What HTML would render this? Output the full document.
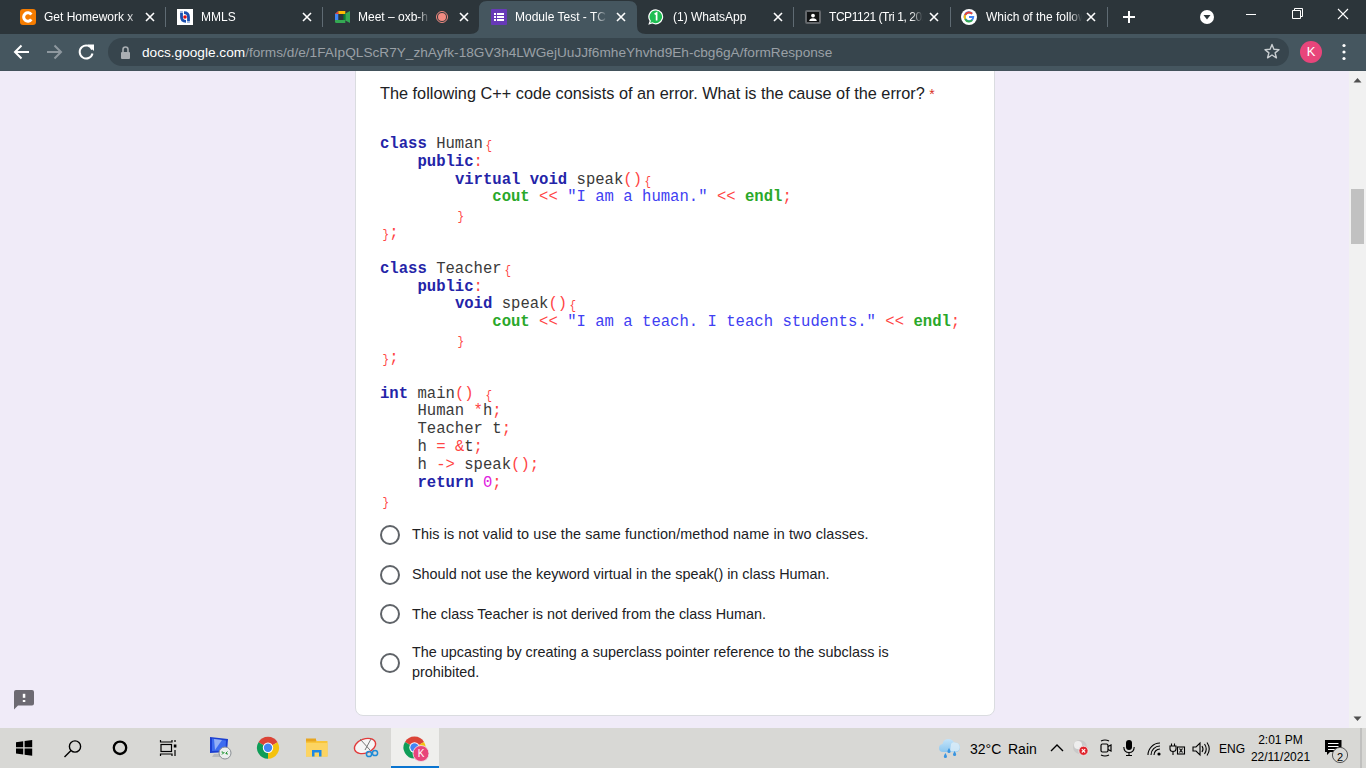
<!DOCTYPE html>
<html><head><meta charset="utf-8">
<style>
*{margin:0;padding:0;box-sizing:border-box}
html,body{width:1366px;height:768px;overflow:hidden;font-family:"Liberation Sans",sans-serif;background:#f0ebf8}
.abs{position:absolute}
#tabstrip{position:absolute;left:0;top:0;width:1366px;height:34px;background:#2c353a}
#toolbar{position:absolute;left:0;top:34px;width:1366px;height:37px;background:#45565f;border-bottom:1px solid #42525b}
#omni{position:absolute;left:108px;top:38px;width:1181px;height:28px;border-radius:14px;background:#37454d}
#page{position:absolute;left:0;top:71px;width:1349px;height:657px;background:#f0ebf8;overflow:hidden}
#scroll{position:absolute;left:1349px;top:71px;width:17px;height:657px;background:#f1f1f1}
#taskbar{position:absolute;left:0;top:728px;width:1366px;height:40px;background:#d8d8d5}
.card{position:absolute;left:355px;top:-20px;width:640px;height:665px;background:#fff;border:1px solid #dadce0;border-radius:8px}
.tab{position:absolute;top:0;height:34px;color:#fff;font-size:13px}
.tabt{position:absolute;top:10px;height:16px;line-height:14px;white-space:nowrap;overflow:hidden;font-size:12px;color:#fff;-webkit-mask-image:linear-gradient(to right,#000 calc(100% - 12px),transparent)}
.sep{position:absolute;top:7px;width:1px;height:20px;background:#5f6b73}
.x{position:absolute;top:10px;width:14px;height:14px}
pre{font-family:"Liberation Mono",monospace}
.code{position:absolute;left:380px;top:65px;font-size:15.6px;line-height:17.83px;color:#3a3a3a;white-space:pre}
.k{color:#2424a8;font-weight:bold}
.b{display:inline-block;font-style:normal;transform:translate(1px,1.5px) scale(.7,.85)}
.r{color:#ff4545}
.g{color:#2aa82a;font-weight:bold}
.s{color:#4040f2}
.m{color:#e020e0}
.opt{position:absolute;left:412px;font-size:14.4px;white-space:nowrap;line-height:20px;color:#202124}
.tb{font-size:14px;line-height:16px;color:#000;white-space:nowrap}
.radio{position:absolute;left:380px;width:20px;height:20px;border:2px solid #5f6368;border-radius:50%}
</style></head><body>

<div id="tabstrip">
  <!-- active tab -->
  <svg class="abs" style="left:470px;top:0" width="176" height="34" viewBox="0 0 176 34">
    <path d="M0 34 Q9 34 9 26 L9 9 Q9 1 17 1 L159 1 Q167 1 167 9 L167 26 Q167 34 176 34 Z" fill="#45565f"/>
  </svg>
  <div class="sep" style="left:165px"></div>
  <div class="sep" style="left:322px"></div>
  <div class="sep" style="left:793px"></div>
  <div class="sep" style="left:950px"></div>
  <div class="sep" style="left:1107px"></div>
  <!-- tab1 -->
  <div class="abs" style="left:20px;top:9px;width:16px;height:16px;background:#f57c00;border-radius:3px"></div>
  <svg class="abs" style="left:20px;top:9px" width="16" height="16" viewBox="0 0 16 16"><path d="M11.3 5.6 A4.2 4.2 0 1 0 11.3 10.4" fill="none" stroke="#fff" stroke-width="3"/></svg>
  <div class="tabt" style="left:44px;width:96px">Get Homework x</div>
  <!-- tab2 -->
  <div class="abs" style="left:177px;top:9px;width:16px;height:16px;background:#fff"></div>
  <svg class="abs" style="left:177px;top:9px" width="16" height="16" viewBox="0 0 16 16"><path d="M4.5 2 L4.5 4" stroke="#9db6e0" stroke-width="2.8"/><path d="M4.5 4 L4.5 8 Q4.5 12.3 9 12.3" fill="none" stroke="#1a4fb0" stroke-width="2.8"/><path d="M11.5 14 L11.5 12" stroke="#9db6e0" stroke-width="2.8"/><path d="M11.5 12 L11.5 8 Q11.5 3.7 7 3.7" fill="none" stroke="#1a4fb0" stroke-width="2.8"/><circle cx="8" cy="8" r="1.8" fill="#e01010"/></svg>
  <div class="tabt" style="left:201px;width:96px">MMLS</div>
  <!-- tab3 -->
  <svg class="abs" style="left:334.5px;top:11px" width="15" height="12" viewBox="0 0 16 14" preserveAspectRatio="none"><path d="M0 3.5 L3.5 0 L3.5 10.5 L0 10.5Z" fill="#4285f4"/><path d="M3.5 0 L11 0 L11 3.5 L3.5 3.5Z" fill="#fbbc04"/><path d="M0 10.5 L11 10.5 L11 14 L1.5 14 Q0 14 0 12.5Z" fill="#34a853"/><path d="M11 3 L16 0 L16 14 L11 11Z" fill="#34a853"/><path d="M0 3.5 L3.5 3.5 L3.5 0Z" fill="#ea4335"/><rect x="9" y="3.5" width="2" height="7" fill="#00832d"/></svg>
  <div class="tabt" style="left:358px;width:72px">Meet – oxb-h</div>
  <div class="abs" style="left:436px;top:11px;width:12px;height:12px;border-radius:50%;border:1px solid #f28b82;background:#2c353a"></div>
  <div class="abs" style="left:438px;top:13px;width:8px;height:8px;border-radius:50%;background:#f28b82"></div>
  <!-- tab4 active -->
  <div class="abs" style="left:491px;top:9px;width:16px;height:16px;background:#673ab7;border-radius:1px"></div>
  <svg class="abs" style="left:491px;top:9px" width="16" height="16" viewBox="0 0 16 16"><rect x="3" y="4" width="2" height="2" fill="#fff"/><rect x="6" y="4" width="7" height="2" fill="#fff"/><rect x="3" y="7" width="2" height="2" fill="#fff"/><rect x="6" y="7" width="7" height="2" fill="#fff"/><rect x="3" y="10" width="2" height="2" fill="#fff"/><rect x="6" y="10" width="7" height="2" fill="#fff"/></svg>
  <div class="tabt" style="left:515px;width:92px">Module Test - TCP1121</div>
  <!-- tab5 -->
  <svg class="abs" style="left:647px;top:8px" width="18" height="18" viewBox="0 0 18 18"><path d="M9 1.2 A7.6 7.6 0 1 1 5.2 15.6 L1.3 16.8 L2.6 13.1 A7.6 7.6 0 0 1 9 1.2Z" fill="#fff"/><path d="M9 2.5 A6.3 6.3 0 1 1 5.5 14.2 L3.2 14.9 L3.9 12.7 A6.3 6.3 0 0 1 9 2.5Z" fill="#1ebe52"/><path d="M7.6 6.3 L9.6 5 L9.6 12.6" fill="none" stroke="#fff" stroke-width="1.7"/></svg>
  <div class="tabt" style="left:673px;width:96px">(1) WhatsApp</div>
  <!-- tab6 -->
  <div class="abs" style="left:805px;top:10px;width:16px;height:14px;background:#111314;border:2px solid #64686c;border-radius:2px"></div>
  <svg class="abs" style="left:805px;top:10px" width="16" height="14" viewBox="0 0 16 14"><circle cx="8" cy="5.6" r="1.9" fill="#fff"/><path d="M4.2 11 Q4.5 8.4 8 8.3 Q11.5 8.4 11.8 11Z" fill="#fff"/></svg>
  <div class="tabt" style="left:829px;width:94px;letter-spacing:-0.45px">TCP1121 (Tri 1, 2021/22)</div>
  <!-- tab7 -->
  <svg class="abs" style="left:961px;top:9px" width="16" height="16" viewBox="0 0 16 16"><circle cx="8" cy="8" r="8" fill="#fff"/><path d="M13.2 7 L8 7 L8 9 L11.2 9 A3.4 3.4 0 1 1 10.4 5.4 L11.8 4 A5.3 5.3 0 1 0 13.2 7Z" fill="#4285f4"/><path d="M3.3 5.5 A5.3 5.3 0 0 1 11.8 4 L10.4 5.4 A3.4 3.4 0 0 0 5 6.5Z" fill="#ea4335"/><path d="M3.3 5.5 L5 6.5 A3.4 3.4 0 0 0 5 9.5 L3.3 10.5 A5.3 5.3 0 0 1 3.3 5.5Z" fill="#fbbc05"/><path d="M3.3 10.5 L5 9.5 A3.4 3.4 0 0 0 10.6 10.5 L12 11.8 A5.3 5.3 0 0 1 3.3 10.5Z" fill="#34a853"/></svg>
  <div class="tabt" style="left:986px;width:96px">Which of the following</div>
  <!-- close xs -->
  <svg class="abs" style="left:0;top:0" width="1366" height="34">
    <g stroke="#fff" stroke-width="1.6" fill="none">
      <path d="M146 13 L154 21 M154 13 L146 21"/>
      <path d="M303 13 L311 21 M311 13 L303 21"/>
      <path d="M460 13 L468 21 M468 13 L460 21"/>
      <path d="M617 13 L625 21 M625 13 L617 21"/>
      <path d="M774 13 L782 21 M782 13 L774 21"/>
      <path d="M930 13 L938 21 M938 13 L930 21"/>
      <path d="M1087 13 L1095 21 M1095 13 L1087 21"/>
      <path d="M1129 11 L1129 23 M1123 17 L1135 17" stroke-width="2"/>
      <path d="M1246 14.5 L1256 14.5" stroke-width="1"/>
      <path d="M1292.5 10.5 h8 v8 h-8 z M1294.5 10.5 v-2 h8 v8 h-2" stroke-width="1"/>
      <path d="M1338 9 L1348 19 M1348 9 L1338 19" stroke-width="1.1"/>
    </g>
    <circle cx="1207" cy="17" r="7" fill="#fff"/>
    <path d="M1203.5 15 L1210.5 15 L1207 19.5Z" fill="#2c353a"/>
  </svg>
</div>

<div id="toolbar"></div>

<div id="omni"></div>
<svg class="abs" style="left:0;top:34px" width="1366" height="37">
  <g fill="none" stroke="#fff" stroke-width="2">
    <path d="M29 18 L15 18 M21.5 11.5 L15 18 L21.5 24.5"/>
    <path d="M47 18 L61 18 M54.5 11.5 L61 18 L54.5 24.5" stroke="#8e989f"/>
    <path d="M92.2 15.5 A6.5 6.5 0 1 0 92.5 19.5"/>
  </g>
  <path d="M87.5 10.5 L94 10.5 L94 17 Z" fill="#fff"/>
  <g fill="#a9aeb2"><rect x="121" y="18" width="9" height="7" rx="1"/></g>
  <path d="M123 18.5 L123 15.5 A2.5 2.5 0 0 1 128 15.5 L128 18.5" fill="none" stroke="#a9aeb2" stroke-width="1.6"/>
  <path d="M1272 10.5 L1273.9 15.3 L1279 15.6 L1275.1 18.9 L1276.4 23.8 L1272 21 L1267.6 23.8 L1268.9 18.9 L1265 15.6 L1270.1 15.3 Z" fill="none" stroke="#c8cdd0" stroke-width="1.4" stroke-linejoin="round"/>
  <circle cx="1311" cy="18" r="11" fill="#e8457b"/>
  <g fill="#fff"><circle cx="1344" cy="11.5" r="1.6"/><circle cx="1344" cy="18" r="1.6"/><circle cx="1344" cy="24.5" r="1.6"/></g>
</svg>
<div class="abs" style="left:1300px;top:44px;width:22px;text-align:center;font-size:13px;line-height:16px;color:#fff">K</div>
<div class="abs" style="left:142px;top:45px;font-size:13.65px;line-height:16px;color:#9aa0a6;white-space:nowrap"><span style="color:#fff">docs.google.com</span>/forms/d/e/1FAIpQLScR7Y_zhAyfk-18GV3h4LWGejUuJJf6mheYhvhd9Eh-cbg6gA/formResponse</div>

<div id="page">
  <div class="card"></div>
  <div class="abs" style="left:380px;top:12px;font-size:16.3px;line-height:20px;color:#202124;white-space:nowrap">The following C++ code consists of an error. What is the cause of the error? <span style="color:#d93025;font-size:14px">*</span></div>
<pre class="code"><span class="k">class</span> Human<span class="r"><i class="b">{</i></span>
    <span class="k">public</span><span class="r">:</span>
        <span class="k">virtual</span> <span class="k">void</span> speak<span class="r">()<i class="b">{</i></span>
            <span class="g">cout</span> <span class="r">&lt;&lt;</span> <span class="s">"I am a human."</span> <span class="r">&lt;&lt;</span> <span class="g">endl</span><span class="r">;</span>
        <span class="r"><i class="b">}</i></span>
<span class="r"><i class="b">}</i>;</span>

<span class="k">class</span> Teacher<span class="r"><i class="b">{</i></span>
    <span class="k">public</span><span class="r">:</span>
        <span class="k">void</span> speak<span class="r">()<i class="b">{</i></span>
            <span class="g">cout</span> <span class="r">&lt;&lt;</span> <span class="s">"I am a teach. I teach students."</span> <span class="r">&lt;&lt;</span> <span class="g">endl</span><span class="r">;</span>
        <span class="r"><i class="b">}</i></span>
<span class="r"><i class="b">}</i>;</span>

<span class="k">int</span> main<span class="r">()</span> <span class="r"><i class="b">{</i></span>
    Human <span class="r">*</span>h<span class="r">;</span>
    Teacher t<span class="r">;</span>
    h <span class="r">=</span> <span class="r">&amp;</span>t<span class="r">;</span>
    h <span class="r">-&gt;</span> speak<span class="r">();</span>
    <span class="k">return</span> <span class="m">0</span><span class="r">;</span>
<span class="r"><i class="b">}</i></span></pre>
  <div class="radio" style="top:454px"></div>
  <div class="opt" style="top:453px;letter-spacing:0.1px">This is not valid to use the same function/method name in two classes.</div>
  <div class="radio" style="top:494px"></div>
  <div class="opt" style="top:493px">Should not use the keyword virtual in the speak() in class Human.</div>
  <div class="radio" style="top:533px"></div>
  <div class="opt" style="top:533px">The class Teacher is not derived from the class Human.</div>
  <div class="radio" style="top:582px"></div>
  <div class="opt" style="top:571px">The upcasting by creating a superclass pointer reference to the subclass is<br>prohibited.</div>
</div>

<svg class="abs" style="left:0;top:680px" width="60" height="48" viewBox="0 0 60 48">
  <path d="M16 10 L32 10 Q34 10 34 12 L34 23.5 Q34 25.5 32 25.5 L18 25.5 L14 29.5 L14 12 Q14 10 16 10Z" fill="#6d6a72"/>
  <rect x="22.8" y="13.8" width="2.5" height="4" fill="#fff"/><rect x="22.8" y="20" width="2.5" height="2" fill="#fff"/>
</svg>
<div id="scroll">
  <svg class="abs" style="left:0;top:0" width="17" height="657">
    <path d="M4.5 11.5 L12.5 11.5 L8.5 7Z" fill="#505050"/>
    <rect x="2" y="118" width="13" height="55" fill="#c1c1c1"/>
    <path d="M4.5 645.5 L12.5 645.5 L8.5 650Z" fill="#505050"/>
  </svg>
</div>
<div id="taskbar">
  <div class="abs" style="left:391px;top:0;width:48px;height:40px;background:#efefed"></div>
  <div class="abs" style="left:391px;top:38px;width:48px;height:2px;background:#0a74d0"></div>
  <svg class="abs" style="left:0;top:0" width="1366" height="40">
    <!-- windows logo -->
    <path d="M16 14.3 L23.2 13.3 L23.2 19.2 L16 19.2Z M24.6 13.1 L32.2 12 L32.2 19.2 L24.6 19.2Z M16 20.6 L23.2 20.6 L23.2 26.6 L16 25.6Z M24.6 20.6 L32.2 20.6 L32.2 27.8 L24.6 26.8Z" fill="#000"/>
    <!-- search -->
    <circle cx="75" cy="18.5" r="5.6" fill="none" stroke="#000" stroke-width="1.4"/>
    <path d="M71 22.5 L64.5 29" stroke="#000" stroke-width="1.5"/>
    <!-- cortana -->
    <circle cx="120" cy="19.8" r="6.2" fill="none" stroke="#000" stroke-width="2.3"/>
    <!-- task view -->
    <g fill="none" stroke="#000" stroke-width="1.2">
      <path d="M160.5 12 V14 H172 V12 M160.5 28 V26 H172 V28"/>
      <rect x="161" y="16.5" width="10.5" height="7"/>
      <path d="M175 12 V14 M175 22 V28"/>
    </g>
    <rect x="173.8" y="16.5" width="2.6" height="3" fill="#000"/>
    <!-- remote desktop -->
    <g>
      <path d="M210 9 L228 11 L227 24 L210 25Z" fill="#1c3fd0"/>
      <path d="M212 10.5 L226 12.5 L225.5 22.5 L212 23Z" fill="#3d6cf0"/>
      <path d="M214 11 L222 12 L215 22Z" fill="#b8cdf8" opacity="0.7"/>
      <path d="M214 26 L226 26 L224 29 L212 29Z" fill="#b9bcc0"/>
      <circle cx="225" cy="25" r="6" fill="#eceeee" stroke="#8a8f94" stroke-width="1"/>
      <path d="M222 26.5 L224.5 24 M227.5 23.5 L225.5 25.5 M221.5 24 L223 24 L223 25.5 M228 26 L226.5 26 L226.5 24.5" stroke="#2a9a3a" stroke-width="1" fill="none"/>
    </g>
    <!-- chrome -->
    <g transform="translate(268,19.8)">
      <path d="M0 0 L-9.53 -5.5 A11 11 0 0 1 9.53 -5.5 Z" fill="#db4437"/>
      <path d="M0 0 L9.53 -5.5 A11 11 0 0 1 0 11 Z" fill="#f4c20d"/>
      <path d="M0 0 L0 11 A11 11 0 0 1 -9.53 -5.5 Z" fill="#0f9d58"/>
      <circle r="5.2" fill="#fff"/><circle r="4.2" fill="#4285f4"/>
    </g>
    <!-- folder -->
    <path d="M306 11 L315 11 L317 13 L327.5 13 L327.5 28.5 L306 28.5Z" fill="#f8c53a"/>
    <rect x="306" y="10.5" width="10" height="3" fill="#e7a520"/>
    <path d="M306 15 L327.5 15 L327.5 28.5 L306 28.5Z" fill="#fcd462"/>
    <path d="M312 28.5 L312 22 L321.5 22 L321.5 28.5 L319 28.5 L319 24.5 L314.5 24.5 L314.5 28.5Z" fill="#1e88e5"/>
    <!-- snipping tool -->
    <ellipse cx="365" cy="18" rx="11" ry="7" fill="#f6f6f6" stroke="#e23b3b" stroke-width="1.3" transform="rotate(-20 365 18)"/>
    <path d="M360 11 L370 22 M371 11 L365 22" stroke="#777" stroke-width="1"/>
    <circle cx="369" cy="26" r="2.6" fill="none" stroke="#1e8ad6" stroke-width="1.5"/>
    <circle cx="375" cy="25" r="2.6" fill="none" stroke="#1e8ad6" stroke-width="1.5"/>
    <!-- chrome active -->
    <g transform="translate(414.5,19.5)">
      <path d="M0 0 L-9.53 -5.5 A11 11 0 0 1 9.53 -5.5 Z" fill="#db4437"/>
      <path d="M0 0 L9.53 -5.5 A11 11 0 0 1 0 11 Z" fill="#f4c20d"/>
      <path d="M0 0 L0 11 A11 11 0 0 1 -9.53 -5.5 Z" fill="#0f9d58"/>
      <circle r="5.2" fill="#fff"/><circle r="4.2" fill="#4285f4"/>
    </g>
    <circle cx="421" cy="25.5" r="8" fill="#e8457b" stroke="#ededed" stroke-width="0.8"/>
    <!-- weather -->
    <defs><linearGradient id="cl" x1="0" y1="0" x2="0" y2="1"><stop offset="0" stop-color="#c4e4fa"/><stop offset="1" stop-color="#8cc6ee"/></linearGradient></defs>
    <g>
      <path d="M943 24 Q939 24 939 20 Q939 16.5 942.5 16 Q943.5 11 948.5 11 Q952.5 11 954 14.5 Q959.5 14 960 19 Q960 24 955.5 24Z" fill="url(#cl)"/>
      <path d="M951 16 Q952.5 13.5 955.5 14.8 Q959.5 15 959.8 19.5 Q959.5 23.5 955.5 23.5 L950 23.5Z" fill="#ddeef8" opacity="0.8"/>
      <path d="M949 20 q-1.6 2.6 -1.6 3.4 a1.6 1.6 0 0 0 3.2 0 q0 -0.8 -1.6 -3.4Z M954.6 23 q-1.6 2.6 -1.6 3.4 a1.6 1.6 0 0 0 3.2 0 q0 -0.8 -1.6 -3.4Z M945.4 25 q-1.6 2.6 -1.6 3.4 a1.6 1.6 0 0 0 3.2 0 q0 -0.8 -1.6 -3.4Z" fill="#3a95e0"/>
    </g>
    <!-- chevron -->
    <path d="M1051 23 L1057 17 L1063 23" fill="none" stroke="#000" stroke-width="1.4"/>
    <!-- gray circle w red x -->
    <circle cx="1080" cy="19" r="7" fill="#c9c9c9"/>
    <circle cx="1078" cy="17" r="4" fill="#eee"/>
    <circle cx="1083.5" cy="22.8" r="4.6" fill="#e0242c" stroke="#f0f0f0" stroke-width="0.8"/>
    <path d="M1081.8 21.1 L1085.2 24.5 M1085.2 21.1 L1081.8 24.5" stroke="#fff" stroke-width="1.1"/>
    <!-- meet-now icon -->
    <g fill="none" stroke="#000" stroke-width="1.2">
      <rect x="1101" y="16" width="7" height="8" rx="1.5"/>
      <path d="M1108 18.5 L1111 17 L1111 23 L1108 21.5"/>
      <path d="M1101 13 Q1105 11 1109 13 M1101 27 Q1105 29 1109 27"/>
    </g>
    <!-- mic -->
    <rect x="1126" y="12" width="6" height="10" rx="3" fill="#000"/>
    <path d="M1123.8 19 Q1124 24.5 1129 24.5 Q1134 24.5 1134.2 19 M1129 24.5 V27.5 M1126 27.5 H1132" fill="none" stroke="#000" stroke-width="1.1"/>
    <!-- wifi -->
    <g fill="none" stroke="#000" stroke-width="1.1">
      <path d="M1148 27 A12 12 0 0 1 1160 15"/>
      <path d="M1151 27 A9 9 0 0 1 1160 18"/>
      <path d="M1154 27 A6 6 0 0 1 1160 21"/>
    </g>
    <circle cx="1159" cy="26" r="1.6" fill="#000"/>
    <!-- plug battery -->
    <g fill="none" stroke="#000" stroke-width="1.1">
      <path d="M1170 18 H1176 V21 Q1176 23.5 1173 23.5 Q1170 23.5 1170 21Z M1171.5 18 V15.5 M1174.5 18 V15.5 M1173 23.5 V27"/>
      <rect x="1177.5" y="19" width="7" height="7"/>
      <path d="M1179.5 20.5 L1182.5 24.5 M1182.5 20.5 L1179.5 24.5"/>
    </g>
    <!-- volume -->
    <g fill="none" stroke="#000" stroke-width="1.1">
      <path d="M1193 19 H1196 L1200 15 V27 L1196 23 H1193Z"/>
      <path d="M1202 18 Q1204 21 1202 24 M1204.5 16 Q1208 21 1204.5 26 M1207 14.5 Q1211.5 21 1207 27.5"/>
    </g>
    <!-- notification -->
    <path d="M1325 12 H1341.5 V24 H1330 L1327 27 V24 H1325Z" fill="#000"/>
    <path d="M1328 15.5 H1338.5 M1328 18.5 H1338.5 M1328 21.5 H1335" stroke="#fff" stroke-width="1"/>
    <circle cx="1340" cy="27" r="7.6" fill="#d8d8d5" stroke="#555" stroke-width="1"/>
    <path d="M1361 0 V40" stroke="#a8a8a8" stroke-width="1"/>
  </svg>
  <div class="abs" style="left:416px;top:20px;width:10px;text-align:center;font-size:10px;line-height:12px;color:#fff">K</div>
  <div class="abs tb" style="left:970px;top:13px">32°C</div>
  <div class="abs tb" style="left:1008px;top:13px">Rain</div>
  <div class="abs tb" style="left:1219px;top:13px;font-size:12px">ENG</div>
  <div class="abs tb" style="left:1252px;top:4px;width:57px;text-align:center;font-size:12px">2:01 PM</div>
  <div class="abs tb" style="left:1250px;top:21px;width:61px;text-align:center;font-size:12px">22/11/2021</div>
  <div class="abs tb" style="left:1334px;top:21px;width:12px;text-align:center;font-size:11px">2</div>
</div>
</body></html>
